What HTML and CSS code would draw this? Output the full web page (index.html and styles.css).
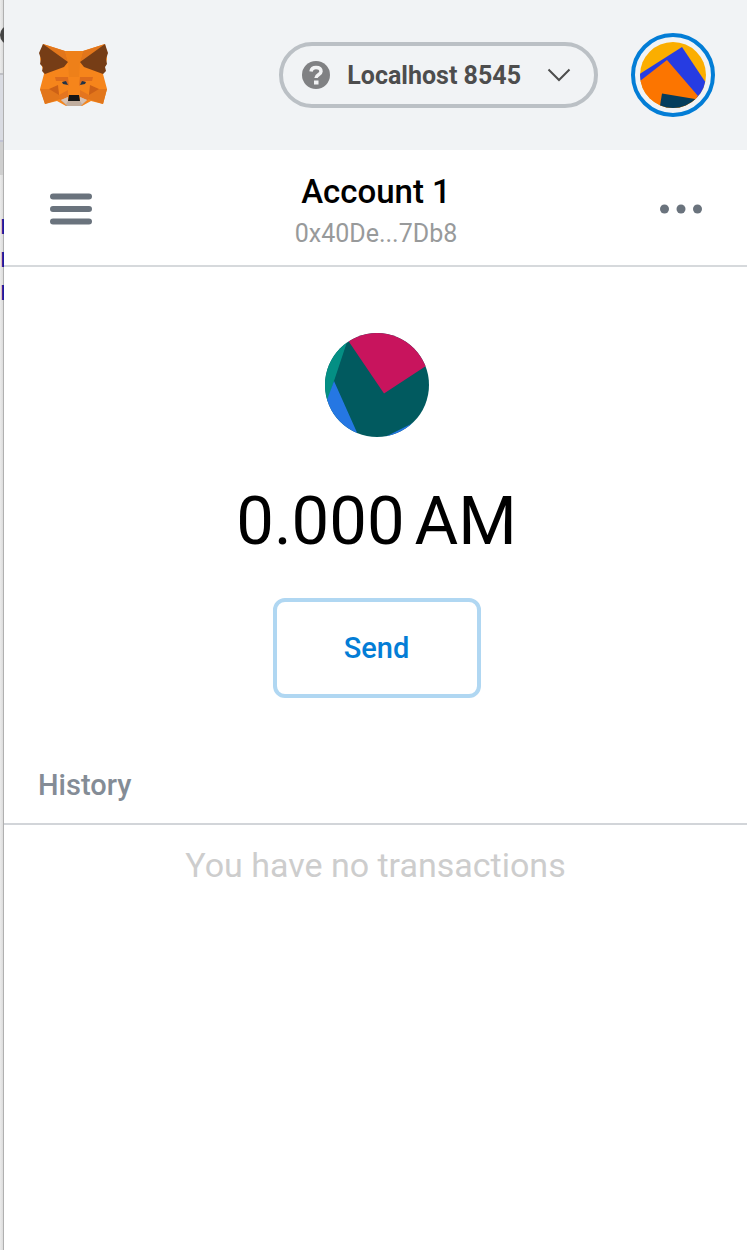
FILE: index.html
```html
<!DOCTYPE html>
<html lang="en">
<head>
<meta charset="utf-8">
<meta name="viewport" content="width=device-width, initial-scale=1">
<title>Wallet</title>
<link rel="stylesheet" href="styles.css">
</head>
<body>
<div class="backdrop" aria-hidden="true">
  <span class="backdrop-dot"></span>
  <span class="backdrop-tab"></span>
  <span class="backdrop-bar"></span>
  <div class="backdrop-code"><span>r</span><span>r</span><span>r</span></div>
</div>
<div class="wallet">
  <header class="topbar">
    <a class="logo" href="#" aria-label="Home">
      <svg viewBox="0 0 90 80" width="90" height="80">
        <path fill="#f6851b" d="M13 9 35 16H53L75 9 77 24 73 39 77 54 73 69 61 66 52 71H36L27 66 15 69 10 54 14 39 10 24Z"/>
        <path fill="#e2761b" d="M13 9 35 16 38 27ZM75 9 53 16 50 27ZM10 54H28L30 64 15 69ZM77 54H60L58 64 73 69Z"/>
        <path fill="#ee8019" d="M38 27 35 16H53L50 27 49 42H39Z"/>
        <path fill="#763d16" d="M13 9 38 27 34 32 15 39 12 36 13 32 10 29 11 24 9 18ZM75 9 50 27 54 32 73 39 76 36 75 32 77 29 76 24 78 18Z"/>
        <path fill="#dd6c1c" d="M25 42H38L39 51 33 46 26 46ZM63 42H50L49 51 55 46 62 46Z"/>
        <path fill="#cd6116" d="M19 54 28 50 29 60ZM69 54 60 50 59 60Z"/>
        <path fill="#e4751f" d="M29 60 38 55 38 63 30 65ZM59 60 50 55 50 63 58 65Z"/>
        <path fill="#c0ad9e" d="M31 65 38 62V66H50V62L57 65 51 71H37Z"/>
        <path fill="#d7c1b3" d="M31 65 38 62V66L36 69ZM57 65 50 62V66L52 69Z"/>
        <path fill="#233447" d="M32 47 36 46 38 50 33 49ZM56 47 52 46 50 50 55 49Z"/>
        <path fill="#161616" d="M39 60H49L50 66H38Z"/>
      </svg>
    </a>
    <div class="topbar-actions">
      <button class="network" type="button">
        <svg class="network-icon" viewBox="0 0 28 28" width="28" height="28" aria-hidden="true">
          <circle cx="14" cy="14" r="14" fill="#808183"/>
          <path d="M9 10.500C9.500 7.500 11.500 6.500 14 6.500C17 6.500 19 8 19 10.500C19 14 14 13.500 14 17" fill="none" stroke="#f2f3f4" stroke-width="3.500"/>
          <path fill="#f2f3f4" d="M12 19.500h4.500v4H12z"/>
        </svg>
        <span class="network-name">Localhost 8545</span>
        <svg class="network-arrow" viewBox="0 0 24 14" width="24" height="14" aria-hidden="true"><path d="M1.500 1.500 12 12 22.500 1.500" fill="none" stroke="#4d4d4d" stroke-width="2"/></svg>
      </button>
      <button class="avatar-button" type="button" aria-label="My accounts">
        <svg viewBox="0 0 66 66" width="66" height="66" aria-hidden="true">
          <defs><clipPath id="avatar-clip"><circle cx="33" cy="33" r="33"/></clipPath></defs>
          <g clip-path="url(#avatar-clip)">
            <path fill="#fbae00" d="M0 0H66V66H0Z"/>
            <path fill="#263ce2" d="M-2 33 42 5 70 47 60 57 2 42Z"/>
            <path fill="#fc7500" d="M-4 42 27 18 58 54 48 68H-4Z"/>
            <path fill="#043d5c" d="M22 51.500 58 57.500 52 70 19 70Z"/>
          </g>
        </svg>
      </button>
    </div>
  </header>

  <nav class="account-bar">
    <button class="icon-button" type="button" aria-label="Menu">
      <svg viewBox="0 0 42 32" width="42" height="32"><path d="M3 3.500H39M3 16H39M3 28.500H39" stroke="#6a737d" stroke-width="6" stroke-linecap="round"/></svg>
    </button>
    <button class="account" type="button">
      <span class="account-name">Account 1</span>
      <span class="account-address">0x40De...7Db8</span>
    </button>
    <button class="icon-button" type="button" aria-label="Account options">
      <svg viewBox="0 0 42 10" width="42" height="10" fill="#6a737d"><circle cx="4.500" cy="5" r="4.500"/><circle cx="21" cy="5" r="4.500"/><circle cx="37.500" cy="5" r="4.500"/></svg>
    </button>
  </nav>

  <main>
    <section class="overview">
      <svg class="identicon" viewBox="0 0 104 104" width="104" height="104" aria-hidden="true">
        <defs><clipPath id="identicon-clip"><circle cx="52" cy="52" r="52"/></clipPath></defs>
        <g clip-path="url(#identicon-clip)">
          <path fill="#015a5f" d="M0 0H104V104H0Z"/>
          <path fill="#c8145d" d="M18 0 59 60.500 104 31V0Z"/>
          <path fill="#048f84" d="M22 9 9 48 2 70H-4V0Z"/>
          <path fill="#2577e3" d="M9 48 34 104H-4L2 67ZM56 106 88 90V106Z"/>
        </g>
      </svg>
      <div class="balance"><span>0.000</span><span>AM</span></div>
      <button class="send" type="button">Send</button>
    </section>
    <section>
      <h2 class="history-title">History</h2>
      <p class="history-empty">You have no transactions</p>
    </section>
  </main>
</div>
</body>
</html>
```
FILE: styles.css
```css
* {
  box-sizing: border-box;
}

body {
  margin: 0;
  min-height: 100vh;
  display: flex;
  background: #fff;
  color: #000;
  font-family: Roboto, "Liberation Sans", sans-serif;
}

button {
  margin: 0;
  padding: 0;
  border: 0;
  background: none;
  color: inherit;
  font: inherit;
  cursor: pointer;
}

svg {
  display: block;
}

/* Edge of the page behind the popup */
.backdrop {
  flex: none;
  display: flex;
  flex-direction: column;
  width: 4px;
  padding-top: 25px;
  background: linear-gradient(to right, #ebebeb, #dcdcdc);
  border-right: 1px solid #b0b0b0;
}

.backdrop-dot {
  width: 20px;
  height: 20px;
  border-radius: 50%;
  background: #444;
}

.backdrop-tab {
  height: 69px;
  margin-top: 28px;
  background: #d9dbe2;
  border-top: 2px solid #bfc0c5;
  border-bottom: 2px solid #c0c2d4;
}

.backdrop-bar {
  height: 33px;
  background: #cfcfcf;
}

.backdrop-code {
  display: flex;
  flex-direction: column;
  padding-top: 34px;
  color: #1a1a9c;
  font: 27px/33px "Liberation Sans", sans-serif;
}

.wallet {
  position: relative;
  flex: 1;
  min-width: 0;
  background: #fff;
}

.topbar {
  display: flex;
  align-items: center;
  justify-content: space-between;
  height: 150px;
  padding: 0 32px 0 26px;
  background: #f1f3f5;
}

.topbar-actions {
  display: flex;
  align-items: center;
  gap: 33px;
}

.network {
  display: flex;
  align-items: center;
  height: 66px;
  padding: 0 23px 0 19px;
  border: 4px solid #bbc0c5;
  border-radius: 33px;
  color: #4d4d4d;
}

.network-name {
  margin: 0 26px 0 17px;
  font-size: 25px;
  font-weight: 700;
}

.avatar-button {
  padding: 5px;
  border: 4px solid #037dd6;
  border-radius: 50%;
}

.account-bar {
  display: flex;
  align-items: center;
  justify-content: space-between;
  height: 117px;
  padding: 2px 45px 0 46px;
  border-bottom: 2px solid #d6d9dc;
}

.account {
  display: flex;
  flex-direction: column;
  align-items: center;
  padding-top: 8px;
}

.account-name {
  font-size: 33px;
  line-height: 42px;
  font-weight: 500;
}

.account-address {
  color: #989a9b;
  font-size: 25px;
  line-height: 42px;
}

.overview {
  display: flex;
  flex-direction: column;
  align-items: center;
  padding: 66px 0 0 2px;
}

.balance {
  display: flex;
  gap: 10px;
  margin-top: 44px;
  font-size: 67px;
  line-height: 80px;
}

.send {
  width: 208px;
  height: 100px;
  margin-top: 37px;
  border: 4px solid #b0d7f2;
  border-radius: 12px;
  color: #037dd6;
  font-size: 29px;
  font-weight: 500;
}

.history-title {
  margin: 0;
  padding: 67px 34px 18px;
  border-bottom: 2px solid #d2d5d9;
  color: #848c96;
  font-size: 29px;
  line-height: 40px;
  font-weight: 500;
}

.history-empty {
  margin: 0;
  padding: 20px 0;
  color: #cdcdcd;
  font-size: 34px;
  line-height: 40px;
  text-align: center;
}
```
